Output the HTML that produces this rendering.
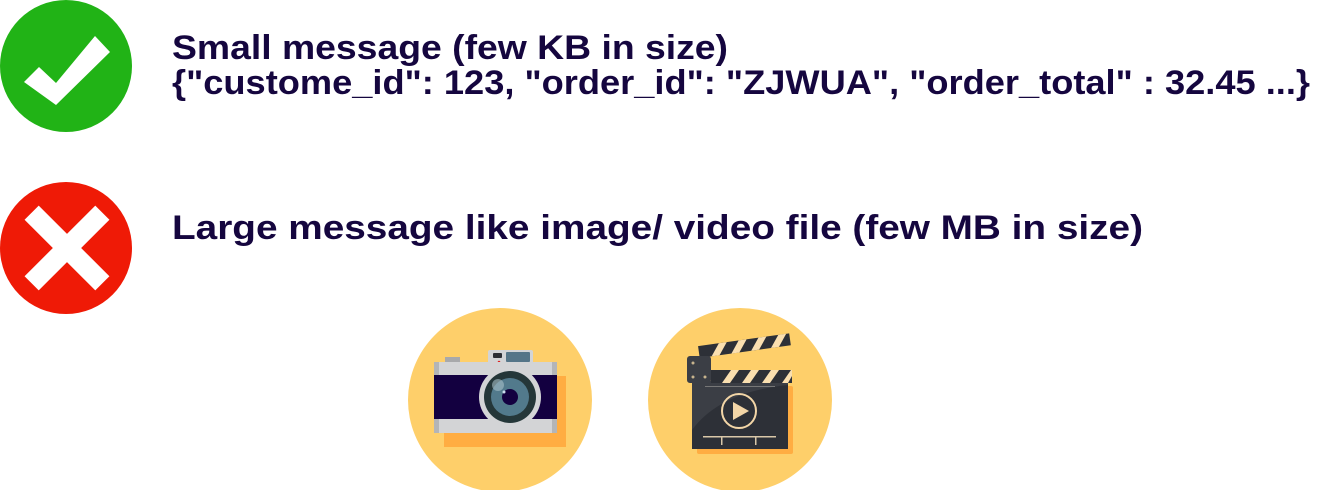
<!DOCTYPE html>
<html><head><meta charset="utf-8">
<style>
html,body{margin:0;padding:0;background:#fff;width:1317px;height:490px;overflow:hidden;position:relative}
.t{position:absolute;left:172px;font-family:"Liberation Sans",sans-serif;font-weight:bold;font-size:34px;line-height:34px;color:#15063f;white-space:nowrap;transform-origin:0 0}
svg{position:absolute;left:0;top:0}
</style></head><body>
<svg width="1317" height="490" viewBox="0 0 1317 490">
 <circle cx="66" cy="66" r="66" fill="#21b316"/>
 <polygon points="24,82 39,67 56,83 95,36 110,52 56,105" fill="#fff"/>
 <circle cx="66" cy="248" r="66" fill="#ef1a06"/>
 <g transform="translate(67,248) rotate(45)" fill="#fff">
  <rect x="-50" y="-10" width="100" height="20"/>
  <rect x="-10" y="-50" width="20" height="100"/>
 </g>
 <circle cx="500" cy="400" r="92" fill="#fecf6a"/>
 <rect x="444" y="376" width="122" height="71" fill="#ffad42"/>
 <rect x="445" y="357" width="15" height="6" fill="#a8a9ab"/>
 <rect x="488" y="350" width="45" height="14" rx="2" fill="#d3d4d6"/>
 <rect x="493" y="353" width="9" height="5" rx="1" fill="#2c2e34"/>
 <rect x="506" y="352" width="24" height="10" rx="1" fill="#557588"/>
 <circle cx="499" cy="362" r="1.3" fill="#d22"/>
 <rect x="434" y="362" width="123" height="71" fill="#d3d4d6"/>
 <rect x="434" y="362" width="5" height="71" fill="#b4b5b7"/>
 <rect x="552" y="362" width="5" height="71" fill="#b4b5b7"/>
 <rect x="434" y="375" width="123" height="44" fill="#130040"/>
 <circle cx="510" cy="397" r="31" fill="#d3d4d6"/>
 <circle cx="510" cy="397" r="26" fill="#253739"/>
 <circle cx="510" cy="397" r="19" fill="#527a8c"/>
 <circle cx="510" cy="397" r="8" fill="#130040"/>
 <circle cx="498" cy="385" r="6" fill="#a9c0c8" opacity=".6"/>
 <circle cx="504" cy="392" r="1.5" fill="#cde"/>
 <circle cx="740" cy="400" r="92" fill="#fecf6a"/>
 <rect x="697" y="386" width="96" height="68" rx="2" fill="#ffad42"/>
 <rect x="692" y="381" width="96" height="68" rx="2" fill="#3b3e45"/>
 <path d="M692 430 Q720 392 788 385 L788 449 L692 449Z" fill="#2d3037"/>
 <rect x="705" y="386" width="70" height="1" fill="#777"/>
 <circle cx="739" cy="411" r="17" fill="none" stroke="#f3d6a7" stroke-width="2"/>
 <polygon points="733,402 733,420 749,411" fill="#f3d6a7"/>
 <rect x="703" y="436" width="73" height="1.5" fill="#d9c7a8"/>
 <rect x="721" y="436" width="1.5" height="9" fill="#d9c7a8"/>
 <rect x="755" y="436" width="1.5" height="9" fill="#d9c7a8"/>
 <rect x="711" y="370" width="81" height="13" fill="#2d3037"/>
 <g fill="#fadfb0"><polygon points="722,383 731,370 739,370 730,383"/><polygon points="742,383 751,370 759,370 750,383"/><polygon points="762,383 771,370 779,370 770,383"/><polygon points="782,383 791,370 792,370 792,376 788,383"/></g>
 <g transform="rotate(-8 700 360)">
  <rect x="700" y="346" width="92" height="12" fill="#2d3037"/>
  <g fill="#fadfb0"><polygon points="712,358 721,346 729,346 720,358"/><polygon points="732,358 741,346 749,346 740,358"/><polygon points="752,358 761,346 769,346 760,358"/><polygon points="772,358 781,346 789,346 780,358"/></g>
 </g>
 <rect x="687" y="356" width="24" height="27" rx="3" fill="#3b3e45"/>
 <g fill="#c8b48e"><circle cx="693" cy="363" r="1.5"/><circle cx="693" cy="377" r="1.5"/><circle cx="705" cy="377" r="1.5"/></g>
</svg>
<div class="t" style="top:31px" data-w="556">Small message (few KB in size)</div>
<div class="t" style="top:66px" data-w="1138">{"custome_id": 123, "order_id": "ZJWUA", "order_total" : 32.45 ...}</div>
<div class="t" style="top:211px" data-w="971">Large message like image/ video file (few MB in size)</div>
<script>
document.querySelectorAll('.t').forEach(function(e){var w=e.getBoundingClientRect().width;e.style.transform='scaleX('+(e.dataset.w/w)+')';});
</script>
</body></html>
